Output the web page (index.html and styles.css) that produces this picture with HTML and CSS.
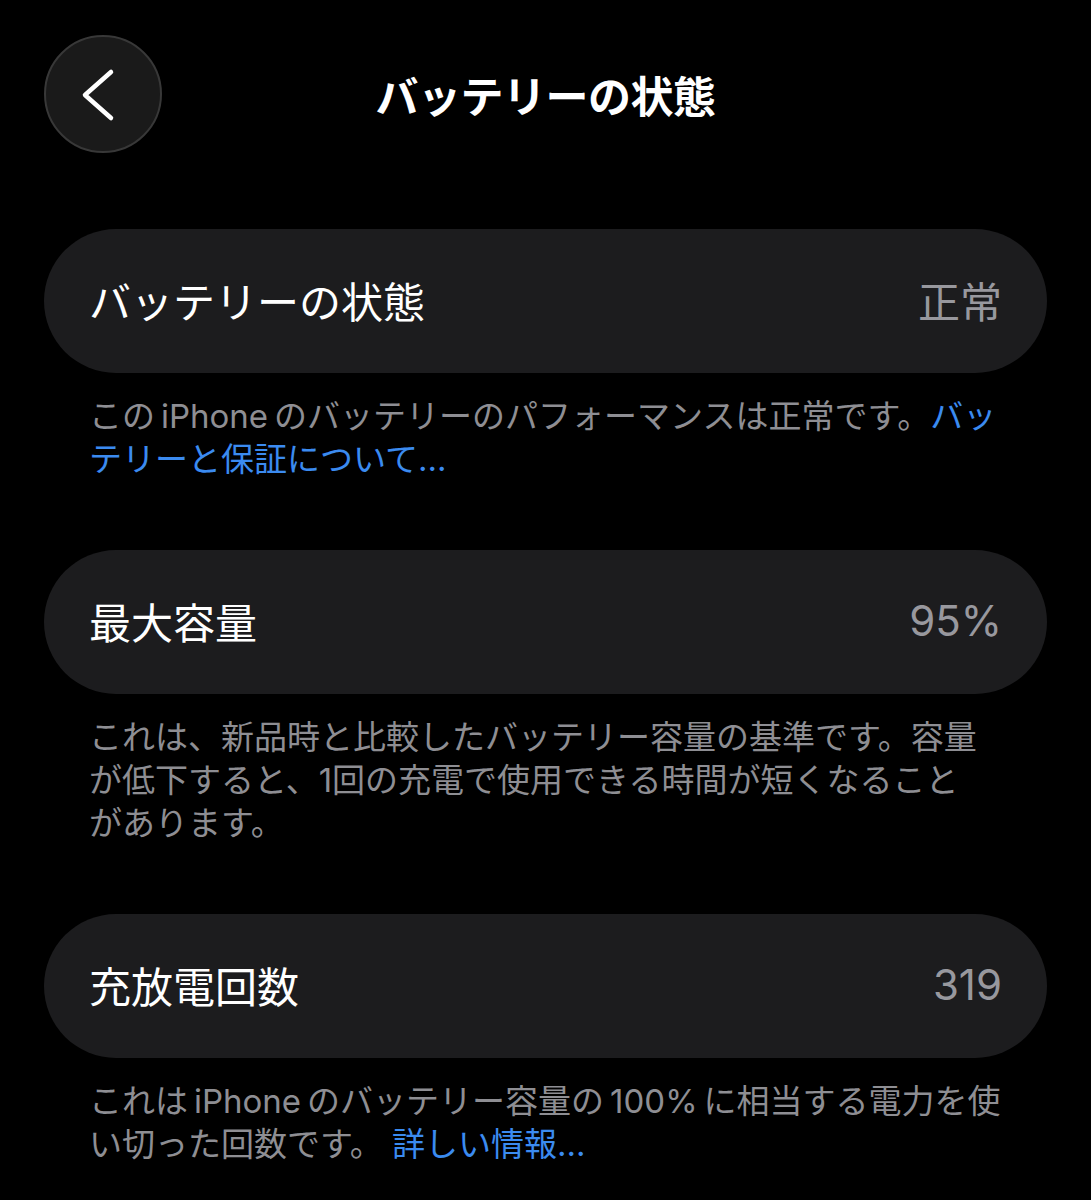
FILE: index.html
```html
<!DOCTYPE html>
<html lang="ja">
<head>
    <meta charset="UTF-8">
    <title>バッテリーの状態</title>
    <link rel="stylesheet" href="styles.css">
</head>
<body>
    <div class="screen">
        <div class="nav">
            <button class="nav__back" aria-label="戻る">
                <svg width="118" height="118" viewBox="0 0 118 118">
                    <path d="M67 37 L41 60 L67 83" fill="none" stroke="#fff" stroke-width="4.5" stroke-linecap="round" stroke-linejoin="round"></path>
                </svg>
            </button>
            <div class="nav__title">バッテリーの状態</div>
            <div></div>
        </div>

        <!-- 状態 -->
        <div class="group">
            <div class="cell">
                <span class="cell__label">バッテリーの状態</span>
                <span class="cell__value">正常</span>
            </div>
            <div class="note">
                この&thinsp;iPhone&thinsp;のバッテリーのパフォーマンスは正常です。<a class="note__link" href="#">バッ<br>テリーと保証について...</a>
            </div>
        </div>

        <!-- 最大容量 -->
        <div class="group">
            <div class="cell">
                <span class="cell__label">最大容量</span>
                <span class="cell__value">95%</span>
            </div>
            <div class="note">
                これは、新品時と比較したバッテリー容量の基準です。容量<br>が低下すると、1回の充電で使用できる時間が短くなること<br>があります。
            </div>
        </div>

        <!-- 充放電回数 -->
        <div class="group">
            <div class="cell">
                <span class="cell__label">充放電回数</span>
                <span class="cell__value">319</span>
            </div>
            <div class="note">
                これは&thinsp;iPhone&thinsp;のバッテリー容量の&thinsp;100%&thinsp;に相当する電力を使<br>い切った回数です。 <a class="note__link" href="#">詳しい情報...</a>
            </div>
        </div>
    </div>
</body>
</html>
```

FILE: styles.css
```css
body {
    margin: 0;
    background: #000;
    color: #fff;
    font-family: Inter, "Noto Sans CJK JP", sans-serif;
}

.screen {
    padding: 35px 44px 0;
}

/* шапка */
.nav {
    display: grid;
    grid-template-columns: 118px 1fr 118px;
    align-items: center;
    height: 118px;
}

.nav__back {
    display: flex;
    align-items: center;
    justify-content: center;
    width: 118px;
    height: 118px;
    padding: 0;
    border: 2px solid #383838;
    border-radius: 50%;
    background: #1a1a1a;
    box-sizing: border-box;
}

.nav__back svg {
    flex: none;
    margin: -2px;
}

.nav__title {
    text-align: center;
    font-size: 43px;
    font-weight: 700;
    letter-spacing: -0.5px;
}

/* группы */
.group {
    margin-bottom: 69px;
}

.nav + .group {
    margin-top: 76px;
}

.cell {
    display: flex;
    align-items: center;
    justify-content: space-between;
    height: 144px;
    padding: 0 45px;
    border-radius: 72px;
    background: #1c1c1e;
}

.cell__label {
    font-size: 42px;
    margin-top: -4px;
}

.cell__value {
    font-size: 42px;
    color: #98989e;
    margin-top: -4px;
}

.note {
    margin-top: 22px;
    padding: 0 45px;
    font-size: 33px;
    line-height: 43px;
    color: #8e8e93;
    white-space: nowrap;
}

.note__link {
    color: #3b8bf0;
    text-decoration: none;
}
```
